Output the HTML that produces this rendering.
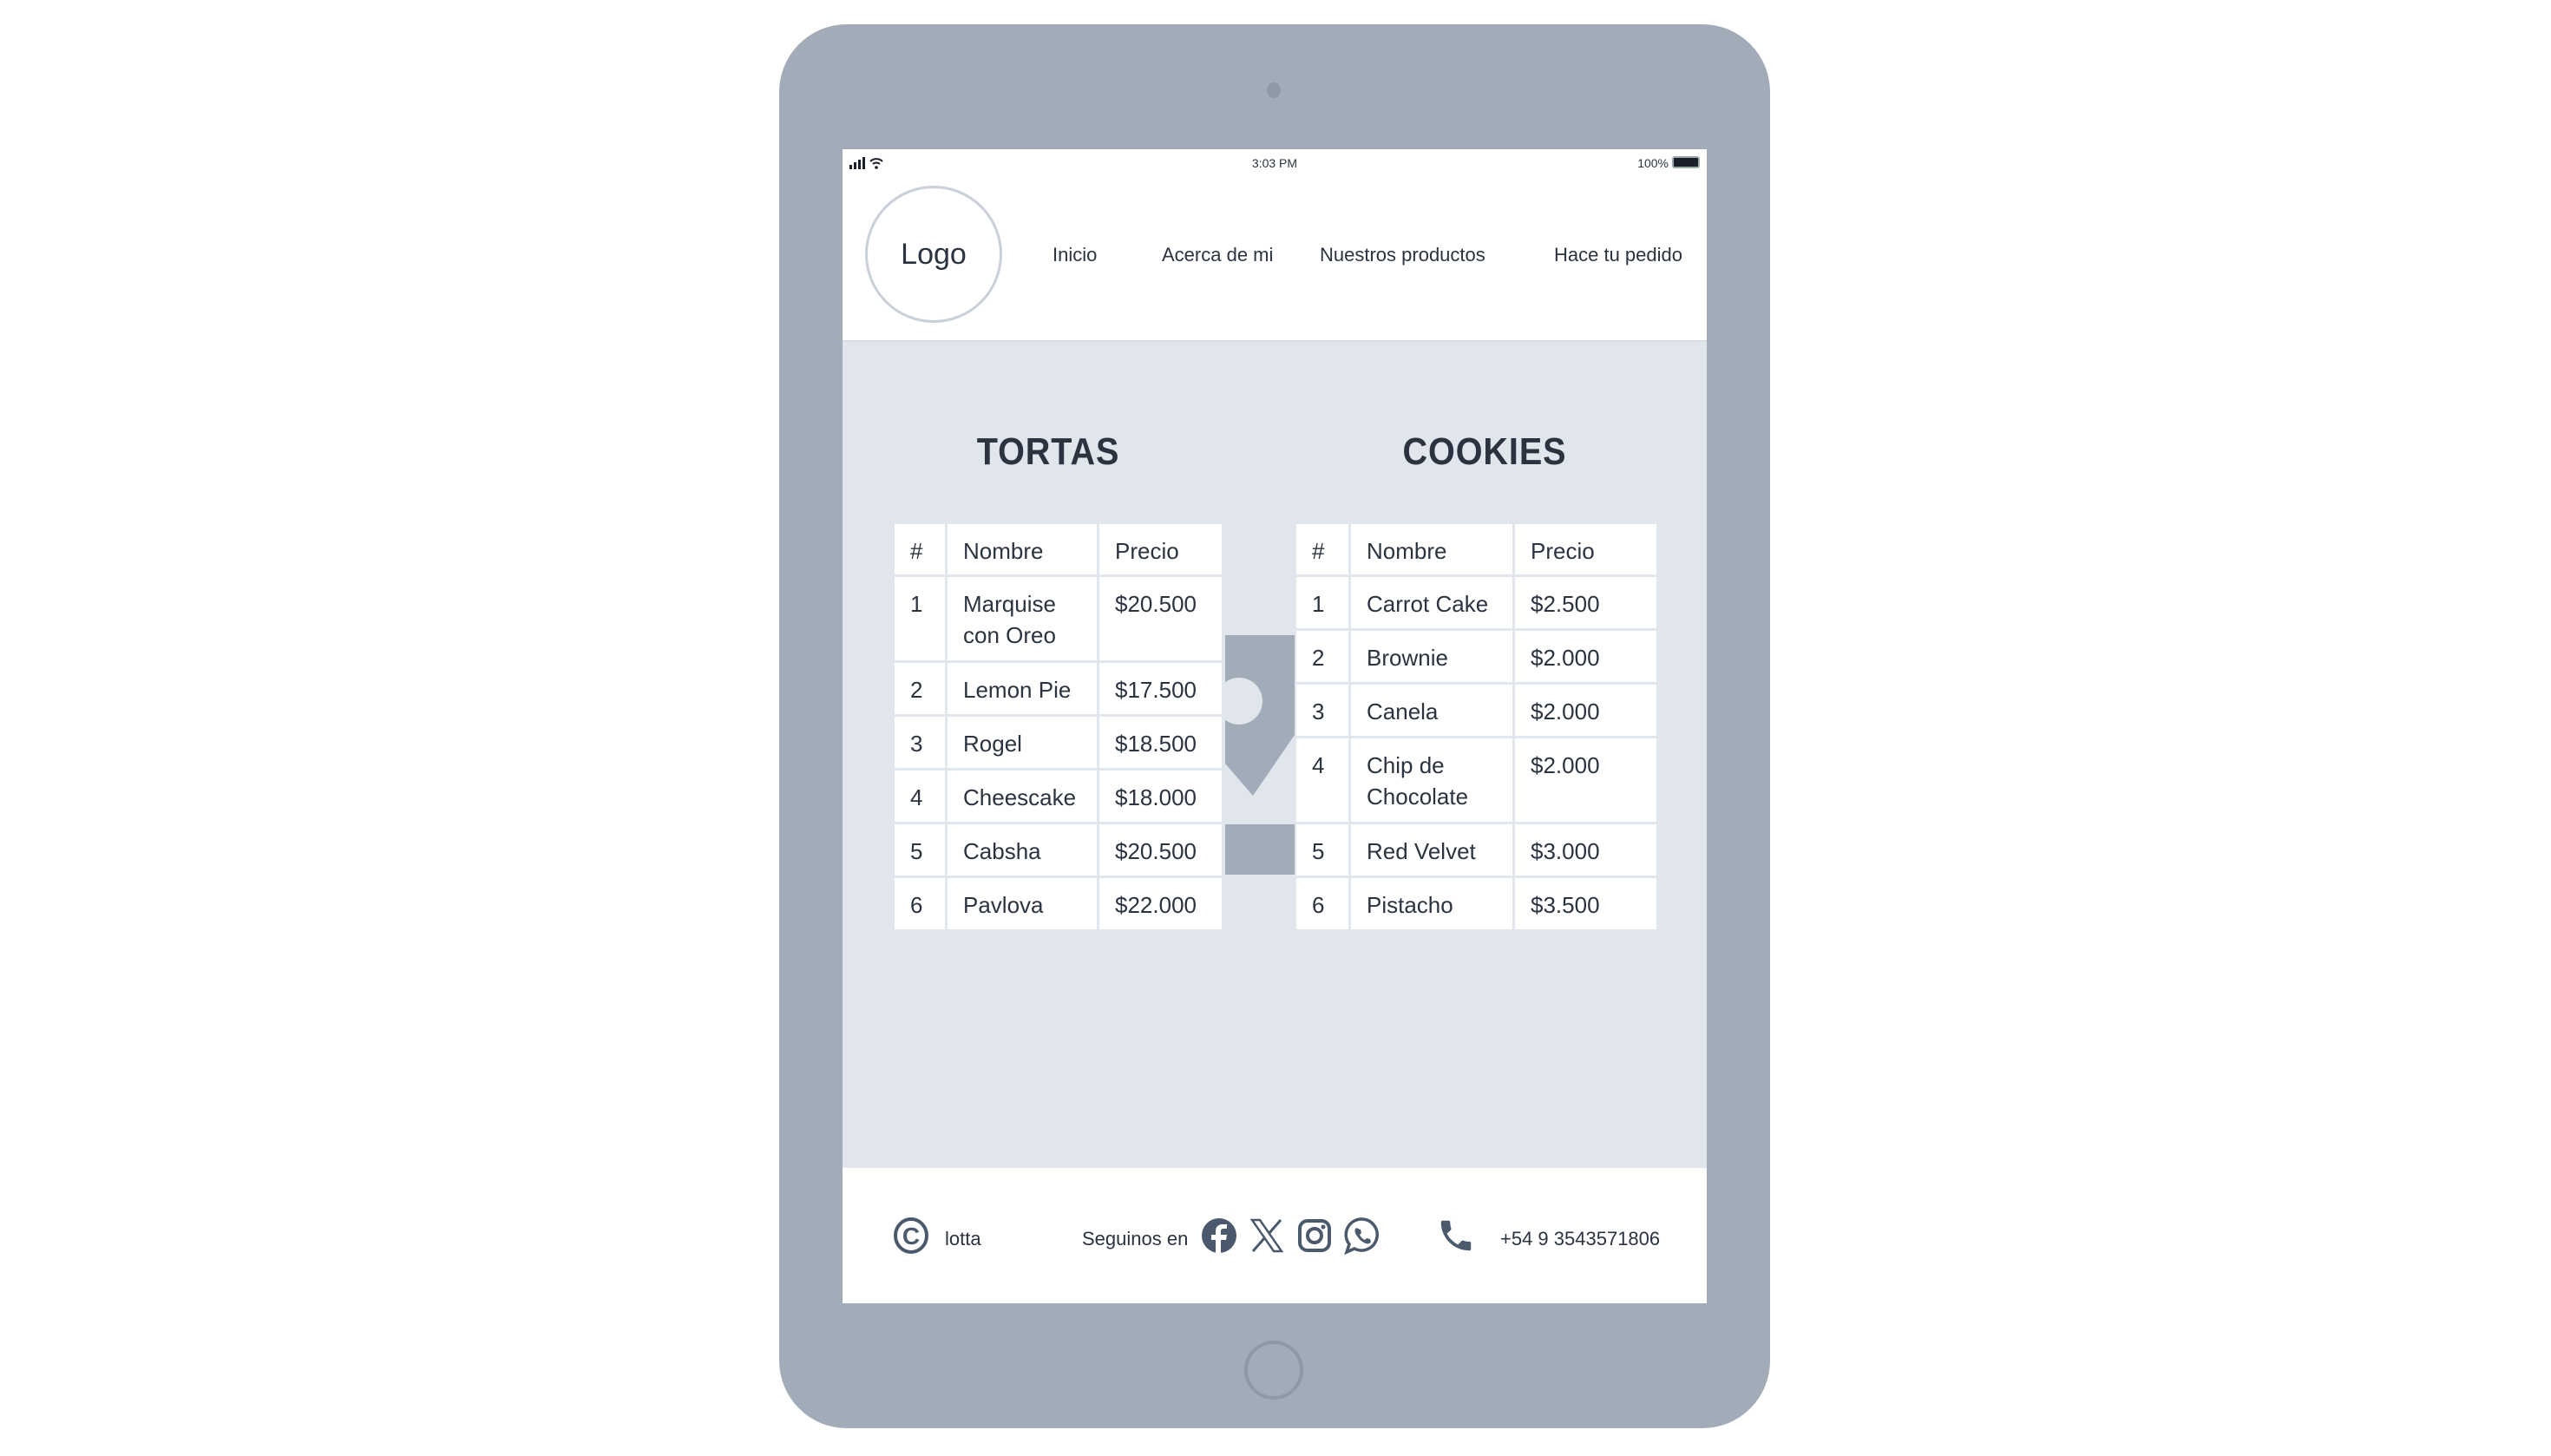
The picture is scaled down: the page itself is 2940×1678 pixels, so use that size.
<!DOCTYPE html>
<html><head><meta charset="utf-8"><style>
*{margin:0;padding:0;box-sizing:border-box}
body{width:2940px;height:1678px;background:#fff;position:relative;overflow:hidden;font-family:"Liberation Sans Narrow","Liberation Sans",sans-serif;color:#2b3340}
.abs{position:absolute}
.dev{left:898px;top:28px;width:1142px;height:1618px;background:#a1acb8;border-radius:78px}
.scr{left:971px;top:172px;width:996px;height:1330px;background:#e1e5ec}
.hdr{left:0;top:0;width:996px;height:222px;background:#fff;border-bottom:2px solid #d8dde5}
.ftr{left:0;top:1174px;width:996px;height:156px;background:#fff}
.nav{top:110px;font-size:22px;line-height:24px}
table{position:absolute;border-collapse:separate;border-spacing:3px;background:#e1e5ec}
td{background:#fff;font-size:26px;vertical-align:top;padding:13px 0 0 18px;line-height:36px}
h2{position:absolute;font-family:"Liberation Sans",sans-serif;font-weight:bold;font-size:44px;top:324px;transform:translateX(-50%) scaleX(.9);letter-spacing:1px}
.ft{top:70px;font-size:22px;line-height:24px}
</style></head><body>
<div class="abs dev"></div>
<div class="abs" style="left:1460px;top:95px;width:16px;height:18px;border-radius:50%;background:#8e99a6"></div>
<div class="abs" style="left:1434px;top:1545px;width:68px;height:68px;border-radius:50%;border:4px solid #8e99a6"></div>
<div class="abs scr">
 <div class="abs hdr">
  <svg class="abs" style="left:8px;top:9px" width="44" height="14" viewBox="0 0 44 14"><rect x="0" y="9" width="3" height="5" fill="#1a1f29"/><rect x="5" y="6" width="3" height="8" fill="#1a1f29"/><rect x="10" y="3" width="3" height="11" fill="#1a1f29"/><rect x="15" y="0" width="3" height="14" fill="#1a1f29"/><path d="M24 5a10 10 0 0 1 14 0M27 8a6 6 0 0 1 8 0" fill="none" stroke="#1a1f29" stroke-width="2"/><circle cx="31" cy="12" r="1.8" fill="#1a1f29"/></svg>
  <div class="abs" style="left:0;width:996px;top:8px;text-align:center;font-size:14px">3:03 PM</div>
  <div class="abs" style="right:44px;top:8px;font-size:14px">100%</div>
  <div class="abs" style="right:8px;top:8px;width:32px;height:14px;background:#1a1f29;border-radius:3px;border:2px solid #9aa"></div>
  <div class="abs" style="left:26px;top:42px;width:158px;height:158px;border-radius:50%;border:3px solid #c9d0da"></div>
  <div class="abs" style="left:26px;top:102px;width:158px;text-align:center;font-size:34px">Logo</div>
  <div class="abs nav" style="left:242px">Inicio</div>
  <div class="abs nav" style="left:368px">Acerca de mi</div>
  <div class="abs nav" style="left:550px">Nuestros productos</div>
  <div class="abs nav" style="left:820px">Hace tu pedido</div>
 </div>
 <h2 style="left:237px">TORTAS</h2>
 <h2 style="left:740px">COOKIES</h2>
 <table style="left:57px;top:429px;width:383px">
  <tr style="height:58px"><td style="width:58px">#</td><td style="width:172px">Nombre</td><td>Precio</td></tr>
  <tr style="height:96px"><td>1</td><td>Marquise<br>con Oreo</td><td>$20.500</td></tr>
  <tr style="height:59px"><td>2</td><td>Lemon Pie</td><td>$17.500</td></tr>
  <tr style="height:59px"><td>3</td><td>Rogel</td><td>$18.500</td></tr>
  <tr style="height:59px"><td>4</td><td>Cheescake</td><td>$18.000</td></tr>
  <tr style="height:59px"><td>5</td><td>Cabsha</td><td>$20.500</td></tr>
  <tr style="height:59px"><td>6</td><td>Pavlova</td><td>$22.000</td></tr>
 </table>
 <table style="left:520px;top:429px;width:421px">
  <tr style="height:58px"><td style="width:60px">#</td><td style="width:186px">Nombre</td><td>Precio</td></tr>
  <tr style="height:59px"><td>1</td><td>Carrot Cake</td><td>$2.500</td></tr>
  <tr style="height:59px"><td>2</td><td>Brownie</td><td>$2.000</td></tr>
  <tr style="height:59px"><td>3</td><td>Canela</td><td>$2.000</td></tr>
  <tr style="height:96px"><td>4</td><td>Chip de<br>Chocolate</td><td>$2.000</td></tr>
  <tr style="height:59px"><td>5</td><td>Red Velvet</td><td>$3.000</td></tr>
  <tr style="height:59px"><td>6</td><td>Pistacho</td><td>$3.500</td></tr>
 </table>
 <svg class="abs" style="left:441px;top:560px" width="80" height="290" viewBox="0 0 80 290">
  <path d="M0 0H80V115L32 185L0 148Z" fill="#a1acb8"/>
  <circle cx="16" cy="76" r="27" fill="#e1e5ec"/>
  <rect x="0" y="218" width="80" height="58" fill="#a1acb8"/>
 </svg>
 <div class="abs ftr">
  <svg class="abs" style="left:58px;top:56px" width="42" height="44" viewBox="0 0 42 44"><ellipse cx="21" cy="22" rx="18" ry="19" fill="none" stroke="#4a5a6c" stroke-width="4"/><text x="21" y="32" text-anchor="middle" font-family="Liberation Sans" font-weight="bold" font-size="28" fill="#4a5a6c">C</text></svg>
  <div class="abs ft" style="left:118px">lotta</div>
  <div class="abs ft" style="left:276px">Seguinos en</div>
  <svg class="abs" style="left:413px;top:56px" width="42" height="44" viewBox="0 0 42 44"><circle cx="21" cy="22" r="20" fill="#4a5a6c"/><path d="M23 44V27h6l1-6h-7v-4c0-2 1-3 3-3h4V9h-5c-5 0-8 3-8 8v4h-5v6h5v17z" fill="#fff"/></svg>
  <svg class="abs" style="left:470px;top:58px" width="38" height="40" viewBox="0 0 38 40"><path d="M2 2h9l25 36h-9z" fill="none" stroke="#4a5a6c" stroke-width="2.5"/><path d="M35 2L21 18M3 38l14-16" stroke="#4a5a6c" stroke-width="3"/></svg>
  <svg class="abs" style="left:524px;top:58px" width="40" height="40" viewBox="0 0 40 40"><rect x="3" y="3" width="34" height="34" rx="9" fill="none" stroke="#4a5a6c" stroke-width="4"/><circle cx="20" cy="20" r="8" fill="none" stroke="#4a5a6c" stroke-width="4"/><circle cx="30" cy="10" r="2.5" fill="#4a5a6c"/></svg>
  <svg class="abs" style="left:578px;top:56px" width="42" height="44" viewBox="0 0 42 44"><path d="M21 3a18 18 0 1 1-9 34l-9 4 3-9A18 18 0 0 1 21 3z" fill="none" stroke="#4a5a6c" stroke-width="3.5"/><path d="M14 13c-2 2-2 5 0 8 3 5 6 8 11 10 3 1 5 0 6-2l-1-3-4-1-2 2c-3-1-5-4-6-6l2-2-1-4-3-1z" fill="#4a5a6c"/></svg>
  <svg class="abs" style="left:684px;top:54px" width="46" height="48" viewBox="0 0 24 24"><path d="M6.6 10.8c1.4 2.8 3.8 5.1 6.6 6.6l2.2-2.2c.3-.3.7-.4 1-.2 1.1.4 2.3.6 3.6.6.6 0 1 .4 1 1V20c0 .6-.4 1-1 1C10.6 21 3 13.4 3 4c0-.6.4-1 1-1h3.5c.6 0 1 .4 1 1 0 1.3.2 2.5.6 3.6.1.3 0 .7-.2 1z" fill="#4a5a6c"/></svg>
  <div class="abs ft" style="left:758px">+54 9 3543571806</div>
 </div>
</div>
</body></html>
